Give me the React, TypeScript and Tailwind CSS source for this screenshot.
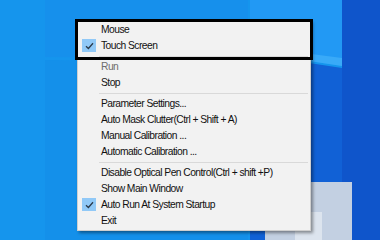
import React from "react";

type Item = { label?: string; sep?: boolean; checked?: boolean; disabled?: boolean };

const items: Item[] = [
  { label: "Mouse" },
  { label: "Touch Screen", checked: true },
  { sep: true },
  { label: "Run", disabled: true },
  { label: "Stop" },
  { sep: true },
  { label: "Parameter Settings..." },
  { label: "Auto Mask Clutter(Ctrl + Shift + A)" },
  { label: "Manual Calibration ..." },
  { label: "Automatic Calibration ..." },
  { sep: true },
  { label: "Disable Optical Pen Control(Ctrl + shift +P)" },
  { label: "Show Main Window" },
  { label: "Auto Run At System Startup", checked: true },
  { label: "Exit" },
];

function Check() {
  return (
    <div className="absolute left-[4px] top-[1px] w-[14px] h-[13px] bg-[#91c9f7] flex items-center justify-center">
      <svg width="9" height="8" viewBox="0 0 9 8">
        <path d="M1 4.2 L3.4 6.5 L8 1.3" fill="none" stroke="#2b3a4a" strokeWidth="1.3" />
      </svg>
    </div>
  );
}

export default function App() {
  return (
    <div className="relative w-[380px] h-[240px] overflow-hidden bg-[#1595ed]" style={{ fontFamily: '"Liberation Sans", Arial, sans-serif' }}>
      <svg className="absolute inset-0" width="380" height="240" viewBox="0 0 380 240">
        <rect x="0" y="0" width="380" height="240" fill="#1595ed" />
        <polygon points="45,0 248,0 248,58 45,57" fill="#1690ec" />
        <polygon points="45,60 248,62 248,240 45,240" fill="#1490ea" />
        <polygon points="250,0 342,0 342,66 250,52" fill="#2299f4" />
        <polygon points="250,46 342,58 342,66 250,52" fill="#39aaf8" />
        <polygon points="250,54 342,68 342,240 250,240" fill="#1161d6" />
        <rect x="342" y="0" width="38" height="240" fill="#0f55cb" />
        <rect x="265" y="182" width="87" height="58" fill="#c3d0e2" />
        <rect x="295" y="212" width="27" height="28" fill="#dce4ee" />
      </svg>

      <div className="absolute left-[77px] top-[20px] w-[234px] bg-[#f2f2f2] border border-[#cfcfcf] py-[1px] shadow-[2px_2px_3px_rgba(0,0,0,0.4)]">
        {items.map((it, i) =>
          it.sep ? (
            <div key={i} className="h-[5px] flex items-center pl-[21px] pr-[2px]">
              <div className="h-px w-full bg-[#d9d9d9]" />
            </div>
          ) : (
            <div
              key={i}
              className={`relative h-[16px] pl-[23px] pt-[1px] flex items-center text-[10.3px] tracking-[-0.55px] leading-none whitespace-nowrap ${
                it.disabled ? "text-[#6d6d6d]" : "text-[#111]"
              }`}
            >
              {it.checked && <Check />}
              {it.label}
            </div>
          )
        )}
      </div>

      <div className="absolute left-[75px] top-[19px] w-[238px] h-[41px] border-[3px] border-black" />
    </div>
  );
}
